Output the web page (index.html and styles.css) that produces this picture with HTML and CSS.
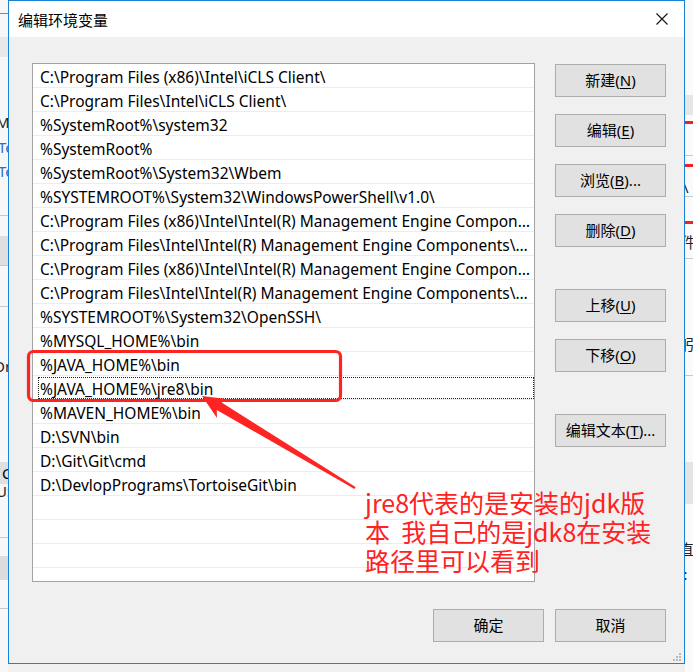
FILE: index.html
```html
<!DOCTYPE html>
<html lang="zh-CN">
<head>
<meta charset="utf-8">
<title>编辑环境变量</title>
<link rel="stylesheet" href="styles.css">
</head>
<body>
<div class="desktop">
  <div class="bgwin bg-left">
    <div class="bg-band b1"></div>
    <div class="bg-txt t1">M</div>
    <div class="bg-txt t2 blue">Te</div>
    <div class="bg-txt t3 blue">Te</div>
    <div class="bg-line l1"></div>
    <div class="bg-band b2"></div>
    <div class="bg-line l2"></div>
    <div class="bg-line l3"></div>
    <div class="bg-txt t4">Dr</div>
    <div class="bg-band b3"><span>C</span></div>
    <div class="bg-txt t5">US</div>
    <div class="bg-line l4"></div>
    <div class="bg-band b4"></div>
    <div class="bg-line l5"></div>
  </div>
  <div class="bgwin bg-right">
    <div class="bg-band rb1"></div>
    <div class="red r1"></div>
    <div class="bg-line rl1"></div>
    <div class="red r2"></div>
    <div class="bg-txt rt1">\</div>
    <div class="bg-line rl2"></div>
    <div class="red r3"></div>
    <div class="bg-txt rt2">件</div>
    <div class="bg-line rl3"></div>
    <div class="bg-txt rt3">躬</div>
    <div class="bg-line rl4"></div>
    <div class="bg-band rb2"></div>
    <div class="bg-txt rt4">直</div>
    <div class="bg-txt rt5">):</div>
  </div>

  <div class="dialog">
    <div class="titlebar">
      <span class="title">编辑环境变量</span>
      <span class="close">
        <svg width="12" height="12" viewBox="0 0 12 12"><path d="M0.5 0.5L11.5 11.5M11.5 0.5L0.5 11.5" stroke="#111" stroke-width="1.1" fill="none"/></svg>
      </span>
    </div>
    <div class="content">
      <div class="main">
        <div class="list">
          <div class="row"><span>C:\Program Files (x86)\Intel\iCLS Client\</span></div>
          <div class="row"><span>C:\Program Files\Intel\iCLS Client\</span></div>
          <div class="row"><span>%SystemRoot%\system32</span></div>
          <div class="row"><span>%SystemRoot%</span></div>
          <div class="row"><span>%SystemRoot%\System32\Wbem</span></div>
          <div class="row"><span>%SYSTEMROOT%\System32\WindowsPowerShell\v1.0\</span></div>
          <div class="row"><span>C:\Program Files (x86)\Intel\Intel(R) Management Engine Components\DAL</span></div>
          <div class="row"><span>C:\Program Files\Intel\Intel(R) Management Engine Components\DAL</span></div>
          <div class="row"><span>C:\Program Files (x86)\Intel\Intel(R) Management Engine Components\IPT</span></div>
          <div class="row"><span>C:\Program Files\Intel\Intel(R) Management Engine Components\IPT</span></div>
          <div class="row"><span>%SYSTEMROOT%\System32\OpenSSH\</span></div>
          <div class="row"><span>%MYSQL_HOME%\bin</span></div>
          <div class="row"><span>%JAVA_HOME%\bin</span></div>
          <div class="row focus"><span>%JAVA_HOME%\jre8\bin</span></div>
          <div class="row"><span>%MAVEN_HOME%\bin</span></div>
          <div class="row"><span>D:\SVN\bin</span></div>
          <div class="row"><span>D:\Git\Git\cmd</span></div>
          <div class="row"><span>D:\DevlopPrograms\TortoiseGit\bin</span></div>
          <div class="row"></div>
          <div class="row"></div>
          <div class="row"></div>
          <div class="row"></div>
          <div class="row"></div>
        </div>
        <div class="actions">
          <button class="btn">新建(<u>N</u>)</button>
          <button class="btn">编辑(<u>E</u>)</button>
          <button class="btn">浏览(<u>B</u>)...</button>
          <button class="btn">删除(<u>D</u>)</button>
          <button class="btn gap">上移(<u>U</u>)</button>
          <button class="btn">下移(<u>O</u>)</button>
          <button class="btn gap">编辑文本(<u>T</u>)...</button>
        </div>
      </div>
      <div class="footer">
        <button class="btn">确定</button>
        <button class="btn">取消</button>
      </div>
    </div>
    <div class="grip">
      <svg width="10" height="10" viewBox="0 0 10 10" fill="#b8b8b8"><rect x="7" y="1" width="2" height="2"/><rect x="4" y="4" width="2" height="2"/><rect x="7" y="4" width="2" height="2"/><rect x="1" y="7" width="2" height="2"/><rect x="4" y="7" width="2" height="2"/><rect x="7" y="7" width="2" height="2"/></svg>
    </div>
  </div>

  <svg class="markup" width="693" height="672" viewBox="0 0 693 672">
    <rect x="28.5" y="351.5" width="312" height="49" rx="5" ry="5" fill="none" stroke="#ff2424" stroke-width="3.2"/>
    <polygon points="202,396 228.5,399.2 221.6,402.6 355.5,487.1 354.5,488.9 216.8,410 217,418" fill="#ff2424"/>
  </svg>
  <div class="note">jre8代表的是安装的jdk版<br>本  我自己的是jdk8在安装<br>路径里可以看到</div>
</div>
</body>
</html>
```

FILE: styles.css
```css
html, body {
  margin: 0;
  padding: 0;
}
body {
  width: 693px;
  height: 672px;
  overflow: hidden;
  background: #f0f0f0;
  font-family: "Noto Sans", "Noto Sans CJK SC", sans-serif;
}
.desktop {
  position: relative;
  width: 693px;
  height: 672px;
  padding-left: 8px;
  box-sizing: border-box;
}

/* background windows */
.bgwin {
  position: absolute;
  top: 0;
  height: 672px;
  overflow: hidden;
  background: #f7f7f7;
}
.bg-left { left: 0; width: 8px; }
.bg-right { left: 685px; width: 8px; background: #fafafa; }
.bgwin > div { position: absolute; left: 0; }
.bg-band { width: 100%; background: #e3e3e3; }
.bg-line { width: 100%; height: 1px; background: #c8c8c8; }
.bg-txt { font-size: 15px; line-height: 18px; color: #222; white-space: nowrap; }
.bg-txt.blue { color: #2a6fc9; }
.b1 { top: 37px; height: 20px; background: #e8e8e8; }
.t1 { top: 113px; left: -4px !important; }
.t2 { top: 138px; left: -2px !important; }
.t3 { top: 162px; left: -2px !important; }
.l1 { top: 215px; }
.b2 { top: 236px; height: 29px; background: #dedede; }
.l2 { top: 265px; }
.l3 { top: 306px; }
.t4 { top: 357px; left: -6px !important; }
.b3 { top: 462px; height: 22px; background: #e0e0e0; font-size: 15px; line-height: 22px; }
.b3 span { margin-left: 2px; }
.t5 { top: 482px; left: -4px !important; }
.l4 { top: 537px; }
.b4 { top: 556px; height: 24px; background: #dcdcdc; }
.l5 { top: 608px; }
.bg-left::before {
  content: "";
  position: absolute;
  left: 0; top: 13px;
  width: 8px; height: 1px;
  background: #888;
}
.rb1 { top: 95px; height: 20px; background: #e6e6e6; }
.red { width: 100%; height: 3px; background: #f02020; }
.r1 { top: 121px; }
.rl1 { top: 155px; }
.r2 { top: 164px; }
.rt1 { top: 178px; left: -2px !important; }
.rl2 { top: 196px; }
.r3 { top: 221px; }
.rt2 { top: 233px; left: -4px !important; }
.rl3 { top: 258px; }
.rt3 { top: 335px; left: -6px !important; }
.rl4 { top: 375px; }
.rb2 { top: 462px; height: 42px; background: #e4e4e4; }
.rt4 { top: 540px; left: -6px !important; }
.rt5 { top: 565px; left: -6px !important; }

/* dialog */
.dialog {
  position: relative;
  width: 677px;
  height: 664px;
  box-sizing: border-box;
  border: 1px solid #1883d7;
  background: #f0f0f0;
  display: flex;
  flex-direction: column;
}
.titlebar {
  height: 36px;
  background: #fff;
  display: flex;
  align-items: center;
  justify-content: space-between;
  padding-left: 9px;
}
.title {
  font-family: "Noto Sans CJK SC", sans-serif;
  font-size: 15px;
  color: #000;
}
.close {
  width: 44px;
  height: 36px;
  display: flex;
  align-items: center;
  justify-content: center;
}
.content {
  flex: 1;
  padding: 26px 18px 0 23px;
  display: flex;
  flex-direction: column;
}
.main {
  display: grid;
  grid-template-columns: 503px 111px;
  column-gap: 20px;
}
.list {
  height: 519px;
  box-sizing: border-box;
  border: 1px solid #a3a3a3;
  background: #fff;
  overflow: hidden;
}
.row {
  position: relative;
  height: 24px;
  box-sizing: border-box;
  border-bottom: 1px solid #ececec;
  padding: 2px 1px 0 7px;
  font-size: 15.5px;
  line-height: 22px;
  color: #000;
  white-space: nowrap;
  overflow: hidden;
  text-overflow: ellipsis;
}
.focus::after {
  content: "";
  position: absolute;
  left: 5px;
  top: 1px;
  right: 0;
  bottom: 0;
  border: 1px dotted #222;
}
.actions {
  display: flex;
  flex-direction: column;
  gap: 17px;
  padding-top: 1px;
}
.btn {
  width: 111px;
  height: 33px;
  box-sizing: border-box;
  border: 1px solid #adadad;
  background: #e1e1e1;
  font-family: "Noto Sans", "Noto Sans CJK SC", sans-serif;
  font-size: 15px;
  color: #000;
  padding: 0;
  line-height: 31px;
}
.btn u { text-underline-offset: 2px; }
.actions .gap { margin-top: 25px; }
.footer {
  margin-top: 27px;
  display: flex;
  justify-content: flex-end;
  gap: 11px;
}
.grip {
  position: absolute;
  right: 2px;
  bottom: 1px;
  line-height: 0;
}

/* annotations */
.markup {
  position: absolute;
  left: 0;
  top: 0;
  pointer-events: none;
}
.note {
  position: absolute;
  left: 365px;
  top: 488px;
  font-family: "Noto Sans CJK SC", sans-serif;
  font-size: 25px;
  line-height: 29px;
  color: #ff2222;
  white-space: pre;
}
```
